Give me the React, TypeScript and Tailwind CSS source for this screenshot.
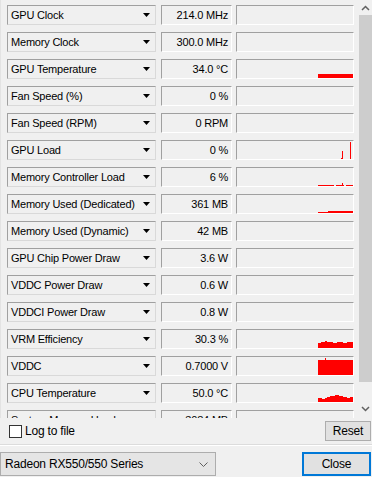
import { ReactNode } from 'react'

type Sensor = { name: string; value: string; graph?: ReactNode }

const RED = '#ff0000'

// little red traces drawn inside the 116x18 graph well
const sensors: Sensor[] = [
  { name: 'GPU Clock', value: '214.0 MHz' },
  { name: 'Memory Clock', value: '300.0 MHz' },
  { name: 'GPU Temperature', value: '34.0 °C', graph: <rect x="81" y="14" width="35" height="4" fill={RED} /> },
  { name: 'Fan Speed (%)', value: '0 %' },
  { name: 'Fan Speed (RPM)', value: '0 RPM' },
  {
    name: 'GPU Load',
    value: '0 %',
    graph: (
      <>
        <rect x="105" y="10" width="1" height="8" fill={RED} />
        <rect x="104" y="17" width="2" height="1" fill={RED} />
        <rect x="113" y="1" width="1" height="17" fill={RED} />
      </>
    ),
  },
  {
    name: 'Memory Controller Load',
    value: '6 %',
    graph: (
      <>
        <rect x="81" y="17" width="16" height="1" fill={RED} />
        <rect x="99" y="17" width="8" height="1" fill={RED} />
        <rect x="105" y="15" width="1" height="2" fill={RED} />
        <rect x="109" y="17" width="7" height="1" fill={RED} />
      </>
    ),
  },
  {
    name: 'Memory Used (Dedicated)',
    value: '361 MB',
    graph: (
      <>
        <rect x="81" y="17" width="10" height="1" fill={RED} />
        <rect x="91" y="16" width="25" height="2" fill={RED} />
      </>
    ),
  },
  { name: 'Memory Used (Dynamic)', value: '42 MB' },
  { name: 'GPU Chip Power Draw', value: '3.6 W' },
  { name: 'VDDC Power Draw', value: '0.6 W' },
  { name: 'VDDCI Power Draw', value: '0.8 W' },
  {
    name: 'VRM Efficiency',
    value: '30.3 %',
    graph: (
      <polygon
        points="81,18 81,13 84,13 84,12 88,12 88,11 90,11 90,12 96,12 96,13 100,13 100,12 106,12 106,13 110,13 110,12 116,12 116,18"
        fill={RED}
      />
    ),
  },
  {
    name: 'VDDC',
    value: '0.7000 V',
    graph: <polygon points="81,18 81,3 88,3 88,1 89,1 89,3 116,3 116,18" fill={RED} />,
  },
  {
    name: 'CPU Temperature',
    value: '50.0 °C',
    graph: (
      <polygon
        points="81,18 81,14 85,14 85,15 88,15 88,14 90,14 90,13 93,13 93,12 98,12 98,11 102,11 102,12 106,12 106,13 110,13 110,14 113,14 113,13 116,13 116,18"
        fill={RED}
      />
    ),
  },
  { name: 'System Memory Used', value: '3084 MB' },
]

function SensorRow({ s }: { s: Sensor }) {
  return (
    <div className="flex h-[20px] shrink-0 items-stretch">
      <div className="flex w-[149px] items-center justify-between border border-t-[#a0a0a0] border-l-[#a0a0a0] border-r-[#d9d9d9] border-b-[#d9d9d9] pl-[3px] pr-[5px]">
        <span className="whitespace-nowrap">{s.name}</span>
        <svg width="7" height="4" viewBox="0 0 7 4" className="shrink-0">
          <polygon points="0,0 7,0 3.5,4" fill="#000" />
        </svg>
      </div>
      <div className="ml-[5px] flex w-[71px] items-center justify-end overflow-hidden border border-t-[#a0a0a0] border-l-[#a0a0a0] border-r-white border-b-white pr-[3px]">
        <span className="whitespace-nowrap">{s.value}</span>
      </div>
      <div className="ml-[4px] w-[118px] border border-t-[#a0a0a0] border-l-[#a0a0a0] border-r-white border-b-white">
        <svg width="116" height="18" viewBox="0 0 116 18" shapeRendering="crispEdges" className="block">
          {s.graph}
        </svg>
      </div>
    </div>
  )
}

function Scrollbar() {
  return (
    <div className="flex w-[13px] shrink-0 flex-col bg-[#f0f0f0]">
      <div className="flex h-[15px] items-center justify-center">
        <svg width="9" height="6" viewBox="0 0 9 6">
          <polyline points="1,5 4.5,1.5 8,5" fill="none" stroke="#606060" strokeWidth="1.5" />
        </svg>
      </div>
      <div className="h-[367px] bg-[#cdcdcd]" />
      <div className="flex flex-1 items-end justify-center pb-[6px]">
        <svg width="9" height="6" viewBox="0 0 9 6">
          <polyline points="1,1 4.5,4.5 8,1" fill="none" stroke="#606060" strokeWidth="1.5" />
        </svg>
      </div>
    </div>
  )
}

export default function App() {
  return (
    <div
      className="h-[477px] w-[372px] overflow-hidden bg-[#f0f0f0] text-[11px] tracking-[-0.2px] text-black"
      style={{ fontFamily: '"Liberation Sans", Arial, sans-serif' }}
    >
      <div className="border-b border-[#dcdcdc]">
        <div className="flex h-[418px] overflow-hidden border-l border-[#e3e3e3]">
          <div className="flex flex-1 flex-col gap-[7px] pl-[6px] pt-[5px]">
            {sensors.map((s) => (
              <SensorRow key={s.name} s={s} />
            ))}
          </div>
          <Scrollbar />
        </div>

        <div className="flex h-[26px] items-center justify-between pl-[9px] pr-[1px]">
          <label className="flex items-center gap-[2px] text-[12px]">
            <span className="h-[13px] w-[13px] border border-[#333] bg-white" />
            <span className="ml-[1px]">Log to file</span>
          </label>
          <button className="h-[20px] w-[46px] border border-[#adadad] bg-[#e1e1e1] text-[12px]">Reset</button>
        </div>
      </div>
      <div className="border-t border-white" />

      <div className="flex items-start justify-between pt-[6px]">
        <div className="flex h-[24px] w-[216px] items-center justify-between border border-[#adadad] bg-[#e5e5e5] pl-[4px] pr-[7px] text-[12px]">
          <span>Radeon RX550/550 Series</span>
          <svg width="9" height="5" viewBox="0 0 9 5">
            <polyline points="0.5,0.5 4.5,4.5 8.5,0.5" fill="none" stroke="#606060" strokeWidth="1" />
          </svg>
        </div>
        <button className="mr-[1px] h-[24px] w-[69px] border-2 border-[#0078d7] bg-[#e1e1e1] text-[12px]">Close</button>
      </div>
    </div>
  )
}
